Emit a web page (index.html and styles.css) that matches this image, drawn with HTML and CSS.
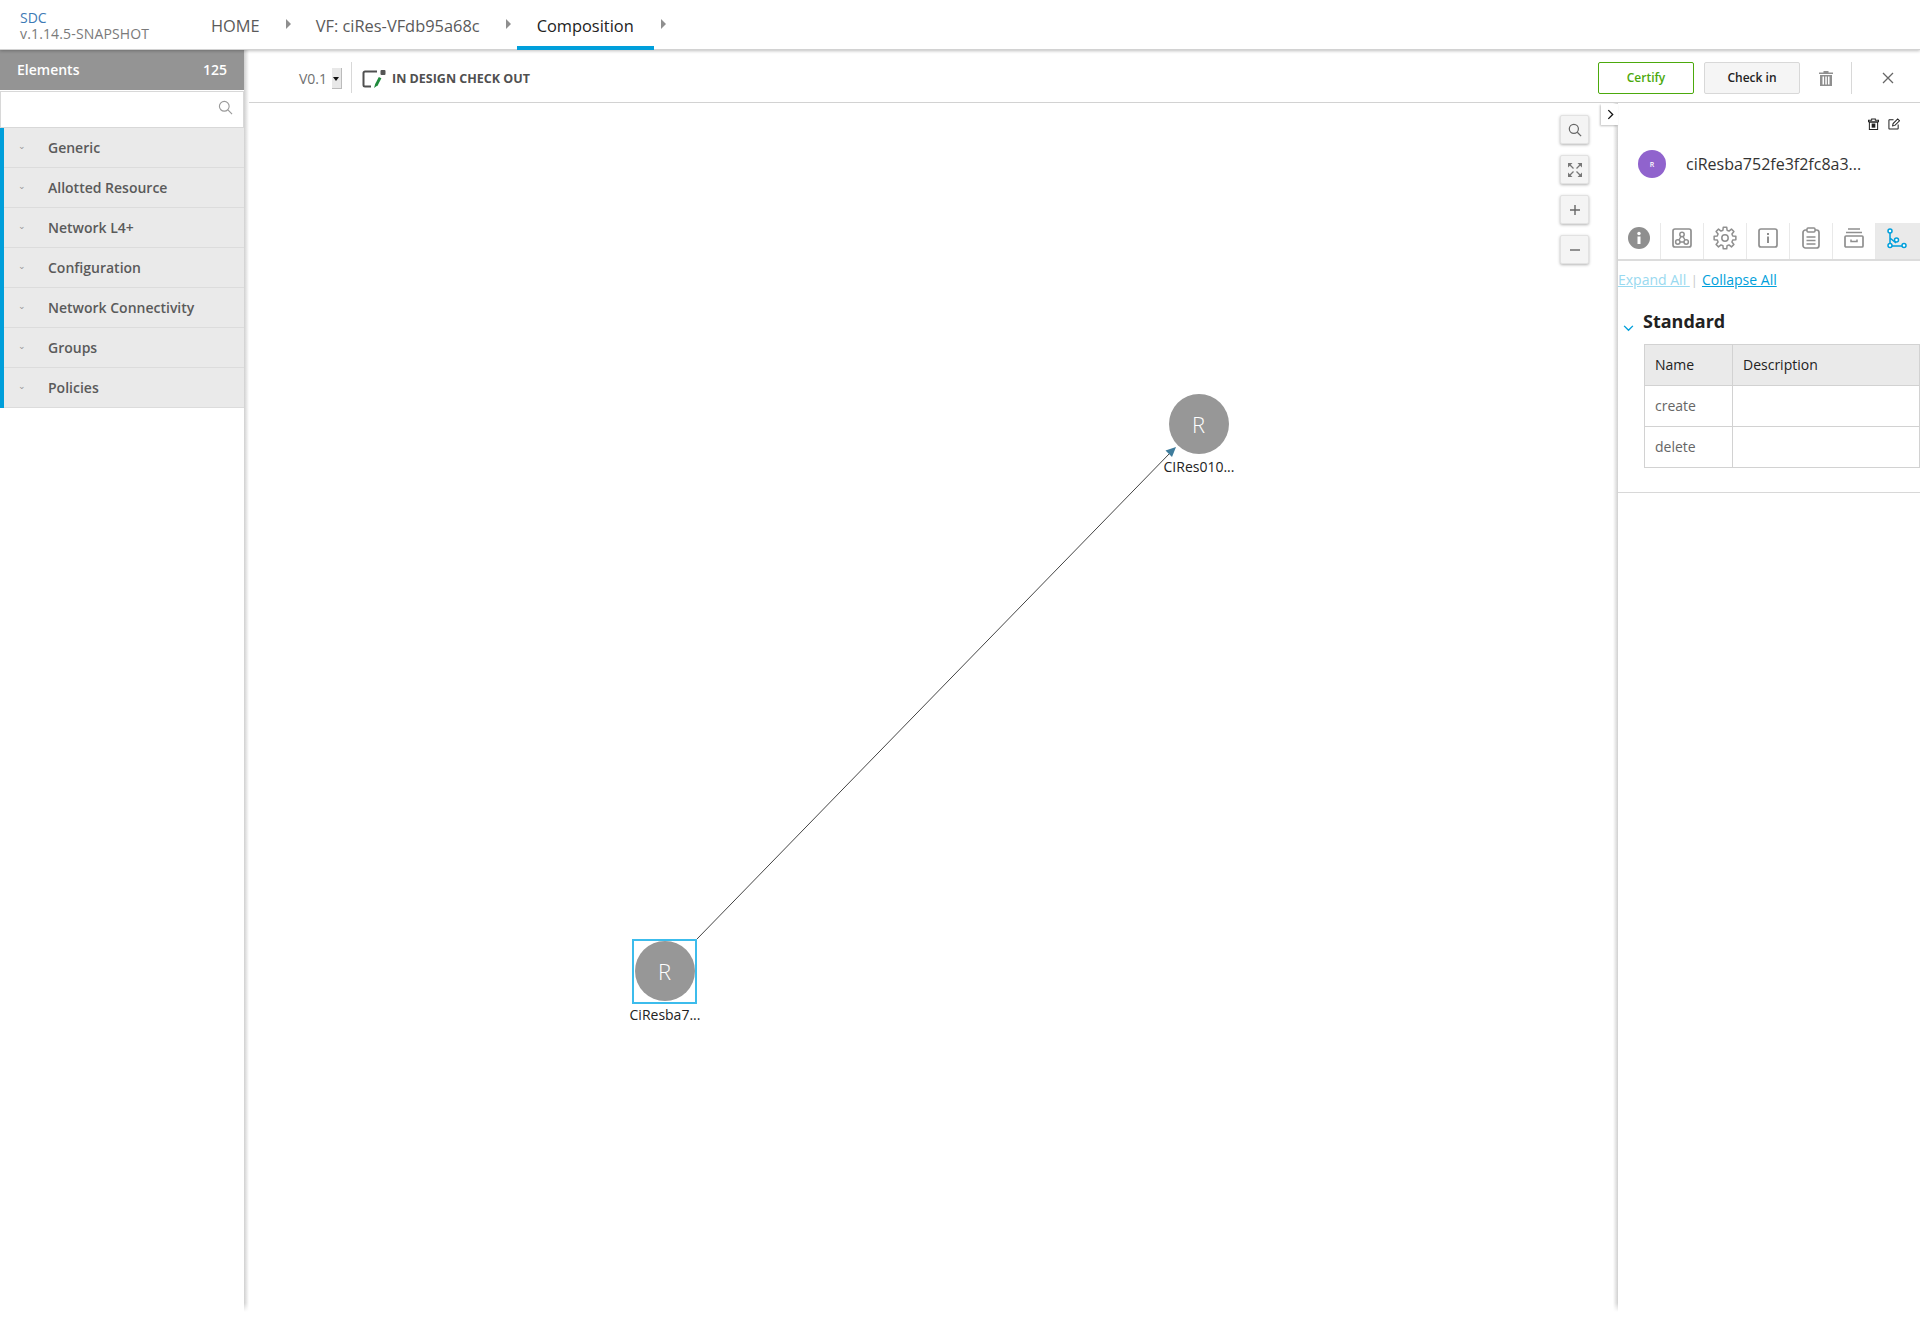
FILE: index.html
```html
<!DOCTYPE html>
<html lang="en">
<head>
<meta charset="utf-8">
<title>SDC Composition</title>
<link rel="stylesheet" href="styles.css">
</head>
<body>
<div class="app">
  <header class="topnav">
    <div class="brand"><div class="brand-name">SDC</div><div class="brand-ver">v.1.14.5-SNAPSHOT</div></div>
    <nav class="crumbs">
      <a class="crumb">HOME</a><span class="tri"></span>
      <a class="crumb crumb-vf">VF: ciRes-VFdb95a68c</a><span class="tri"></span>
      <a class="crumb crumb-active">Composition</a><span class="tri"></span>
    </nav>
  </header>
  <div class="main">
    <aside class="palette">
      <div class="pal-head"><span>Elements</span><span>125</span></div>
      <div class="pal-search">
        <svg class="ic-search" viewBox="0 0 16 16" width="15" height="15"><circle cx="6.7" cy="6.7" r="5.2" fill="none" stroke="#9a9a9a" stroke-width="1.2"/><path d="M10.6 10.6l4.4 4.4" stroke="#9a9a9a" stroke-width="1.2"/></svg>
      </div>
      <ul class="pal-list">
        <li class="pal-item"><span class="chev">&#8964;</span>Generic</li>
        <li class="pal-item"><span class="chev">&#8964;</span>Allotted Resource</li>
        <li class="pal-item"><span class="chev">&#8964;</span>Network L4+</li>
        <li class="pal-item"><span class="chev">&#8964;</span>Configuration</li>
        <li class="pal-item"><span class="chev">&#8964;</span>Network Connectivity</li>
        <li class="pal-item"><span class="chev">&#8964;</span>Groups</li>
        <li class="pal-item"><span class="chev">&#8964;</span>Policies</li>
      </ul>
    </aside>
    <section class="workspace">
      <div class="toolbar">
        <div class="ver"><span>V0.1</span><span class="ver-sel"><i></i></span></div>
        <div class="status">
          <svg viewBox="0 0 24 18" width="24" height="18"><path d="M15 1.500H3A1.500 1.500 0 0 0 1.500 3v12A1.500 1.500 0 0 0 3 16.500h6" fill="none" stroke="#505050" stroke-width="2"/><path d="M12 18l1.200-4 3.600-7 2.600 1.300-3.600 7z" fill="#1f8a3c"/><rect x="18.500" y="0" width="5" height="5" rx="1" fill="#555"/></svg>
          <span>IN DESIGN CHECK OUT</span>
        </div>
        <div class="actions">
          <button class="btn btn-certify">Certify</button>
          <button class="btn btn-checkin">Check in</button>
          <svg class="act-trash" viewBox="0 0 14 16" width="14" height="16"><path d="M4.500 1h5V2.500H14V4H0V2.500h4.500zM1 5h12V16H1zM3.500 6.500v8h1.500v-8zM6.300 6.500v8h1.500v-8zM9 6.500v8h1.500v-8z" fill="#8f8f8f" fill-rule="evenodd"/></svg>
          <span class="act-sep"></span>
          <svg class="act-close" viewBox="0 0 12 12" width="12" height="12"><path d="M1 1l10 10M11 1L1 11" stroke="#666" stroke-width="1.300"/></svg>
        </div>
      </div>
      <div class="body">
        <div class="canvas">
          <svg class="edges" width="1373" height="1207"><path d="M452 836L926 349" stroke="#444" stroke-width="1"/><path d="M931 344l-10.500 3.500 6.500 6.500z" fill="#3f7c9c"/></svg>
          <div class="node node-a"><span class="node-dot">R</span><span class="node-label">CiResba7...</span></div>
          <div class="node node-b"><span class="node-dot">R</span><span class="node-label">CIRes010...</span></div>
          <div class="zoomers">
            <span class="zbtn"><svg viewBox="0 0 16 16" width="14" height="14"><circle cx="6.700" cy="6.700" r="5.200" fill="none" stroke="#666" stroke-width="1.400"/><path d="M10.600 10.600l4.400 4.400" stroke="#666" stroke-width="1.400"/></svg></span>
            <span class="zbtn"><svg viewBox="0 0 14 14" width="14" height="14"><path d="M0 0h4.500L0 4.500zM14 0v4.500L9.500 0zM0 14V9.500L4.500 14zM14 14H9.500L14 9.500z" fill="#777"/><path d="M2 2l3.500 3.500M12 2L8.500 5.500M2 12l3.500-3.500M12 12L8.500 8.500" stroke="#777" stroke-width="1.300"/></svg></span>
            <span class="zbtn"><svg viewBox="0 0 12 12" width="12" height="12"><path d="M6 1v10M1 6h10" stroke="#666" stroke-width="1.400"/></svg></span>
            <span class="zbtn"><svg viewBox="0 0 12 12" width="12" height="12"><path d="M1 6h10" stroke="#666" stroke-width="1.400"/></svg></span>
          </div>
          <span class="collapse-tab"><svg viewBox="0 0 8 12" width="7" height="11"><path d="M1.500 1l5 5-5 5" fill="none" stroke="#111" stroke-width="1.500"/></svg></span>
        </div>
        <aside class="details">
          <div class="det-head">
            <div class="det-tools">
              <svg viewBox="0 0 12 13" width="11" height="12"><path d="M4 1h4v1.500h3.500V4h-11V2.500H4zM1.500 4.500h9V12.500h-9z" fill="none" stroke="#222" stroke-width="1.100"/><rect x="4" y="6" width="4" height="4.500" fill="#222"/></svg>
              <svg viewBox="0 0 13 13" width="12" height="12"><path d="M6 2H1.500a.5.5 0 0 0-.5.5v9a.5.5 0 0 0 .5.500h9a.5.5 0 0 0 .5-.5V7" fill="none" stroke="#222" stroke-width="1.100"/><path d="M5 8.500L5.500 6l5-5 2 2-5 5z" fill="none" stroke="#222" stroke-width="1.100"/></svg>
            </div>
            <div class="det-title"><span class="avatar">R</span><span class="det-name">ciResba752fe3f2fc8a3...</span></div>
          </div>
          <div class="tabs">
            <span class="tab"><svg viewBox="0 0 22 22" width="22" height="22"><circle cx="11" cy="11" r="11" fill="#8f8f8f"/><rect x="9.500" y="9.500" width="3" height="7.500" fill="#fff"/><circle cx="11" cy="6.500" r="1.700" fill="#fff"/></svg></span>
            <span class="tab"><svg viewBox="0 0 20 20" width="20" height="20"><rect x="1" y="1" width="18" height="18" rx="2" fill="none" stroke="#8f8f8f" stroke-width="1.700"/><circle cx="10" cy="6.500" r="2.200" fill="none" stroke="#8f8f8f" stroke-width="1.500"/><circle cx="5.800" cy="14" r="2.200" fill="none" stroke="#8f8f8f" stroke-width="1.500"/><circle cx="14.200" cy="14" r="2.200" fill="none" stroke="#8f8f8f" stroke-width="1.500"/><path d="M9 8.500l-2 3.500M11 8.500l2 3.500M8 14h4" stroke="#8f8f8f" stroke-width="1.500"/></svg></span>
            <span class="tab"><svg viewBox="0 0 24 24" width="24" height="24"><path d="M19.730 9.930L22.860 10.280V13.720L19.730 14.070L18.930 16L20.900 18.470L18.470 20.900L16 18.930L14.070 19.730L13.720 22.860H10.280L9.930 19.730L8 18.930L5.530 20.900L3.100 18.470L5.070 16L4.270 14.070L1.140 13.720V10.280L4.270 9.930L5.070 8L3.100 5.530L5.530 3.100L8 5.070L9.930 4.270L10.280 1.140H13.720L14.070 4.270L16 5.070L18.470 3.100L20.900 5.530L18.930 8z" fill="none" stroke="#8f8f8f" stroke-width="1.500" stroke-linejoin="round"/><circle cx="12" cy="12" r="3.200" fill="none" stroke="#8f8f8f" stroke-width="1.500"/></svg></span>
            <span class="tab"><svg viewBox="0 0 20 20" width="20" height="20"><rect x="1" y="1" width="18" height="18" rx="2" fill="none" stroke="#8f8f8f" stroke-width="1.700"/><rect x="9" y="8.500" width="2" height="6.500" fill="#8f8f8f"/><rect x="9" y="5" width="2" height="2" fill="#8f8f8f"/></svg></span>
            <span class="tab"><svg viewBox="0 0 18 22" width="18" height="22"><rect x="1" y="3" width="16" height="18" rx="2.500" fill="none" stroke="#8f8f8f" stroke-width="1.700"/><rect x="5" y="1" width="8" height="4" rx="1" fill="#fff" stroke="#8f8f8f" stroke-width="1.500"/><path d="M4.500 10h9M4.500 13.500h9M4.500 17h9" stroke="#8f8f8f" stroke-width="1.500"/></svg></span>
            <span class="tab"><svg viewBox="0 0 20 20" width="20" height="20"><path d="M4 1h12M2 4.500h16" stroke="#8f8f8f" stroke-width="1.700"/><rect x="1" y="8" width="18" height="11" rx="1" fill="none" stroke="#8f8f8f" stroke-width="1.700"/><path d="M7 11.500v2h6v-2" fill="none" stroke="#8f8f8f" stroke-width="1.500"/></svg></span>
            <span class="tab tab-active"><svg viewBox="0 0 20 21" width="20" height="21"><path d="M3 4v14M3 18h12M3 10l6 5" fill="none" stroke="#009fdb" stroke-width="1.500"/><circle cx="3" cy="3" r="2" fill="#fff" stroke="#009fdb" stroke-width="1.500"/><circle cx="3" cy="17.500" r="2" fill="#fff" stroke="#009fdb" stroke-width="1.500"/><circle cx="9.500" cy="12" r="2" fill="#fff" stroke="#009fdb" stroke-width="1.500"/><circle cx="17" cy="17.500" r="2" fill="#fff" stroke="#009fdb" stroke-width="1.500"/></svg></span>
          </div>
          <div class="det-body">
            <div class="expanders"><a class="exp-off">Expand All </a><span class="pipe">|</span><a class="exp-on">Collapse All</a></div>
            <div class="section">
              <div class="sec-title"><svg viewBox="0 0 12 8" width="11" height="7"><path d="M1 1l5 5 5-5" fill="none" stroke="#009fdb" stroke-width="1.600"/></svg><span>Standard</span></div>
              <table class="ops">
                <thead><tr><th>Name</th><th>Description</th></tr></thead>
                <tbody><tr><td>create</td><td></td></tr><tr><td>delete</td><td></td></tr></tbody>
              </table>
            </div>
          </div>
        </aside>
      </div>
    </section>
  </div>
</div>
</body>
</html>
```

FILE: styles.css
```css
* { box-sizing: border-box; }
html, body { margin: 0; padding: 0; background: #fff; }
body { font-family: "Open Sans", "Liberation Sans", sans-serif; color: #5a5a5a; }
.app { width: 1920px; height: 1319px; overflow: hidden; display: flex; flex-direction: column; }

.topnav { height: 50px; flex: none; display: flex; background: #fff; border-bottom: 1px solid #d2d2d2; box-shadow: 0 1px 3px rgba(0,0,0,.25); position: relative; z-index: 3; }
.brand { width: 211px; padding: 10px 0 0 20px; font-size: 14px; line-height: 16px; }
.brand-name { color: #3d7ab5; }
.brand-ver { color: #7a7a7a; letter-spacing: .15px; }
.crumbs { display: flex; align-items: stretch; }
.crumb { font-size: 16.400px; line-height: 51px; color: #5a5a5a; white-space: nowrap; }
.crumb-active { color: #222; padding: 0 20px; border-bottom: 4px solid #009fdb; height: 50px; }
.tri { width: 0; height: 0; border-left: 5px solid #8f8f8f; border-top: 5px solid transparent; border-bottom: 5px solid transparent; margin: 19px 25px 0 26px; }
.crumb-active + .tri { margin-left: 7px; }
.crumb-vf + .tri { margin: 19px 6px 0 26px; }

.main { flex: 1; display: flex; min-height: 0; }
.palette { width: 244px; margin-right: 1px; flex: none; height: 1262px; background: #fff; position: relative; z-index: 2; }
.palette::after { content: ""; position: absolute; left: 100%; top: 0; bottom: 0; width: 5px; background: linear-gradient(to right, #d0d0d0, #fff); -webkit-mask-image: linear-gradient(to bottom, #000 calc(100% - 9px), transparent); mask-image: linear-gradient(to bottom, #000 calc(100% - 9px), transparent); }
.pal-head { height: 40px; background: #949494; color: #fff; font-size: 14px; font-weight: 600; display: flex; justify-content: space-between; align-items: center; padding: 0 17px 1px; }
.pal-search { height: 37px; margin: 1px 0 0 0; border: 1px solid #d8d8d8; display: flex; align-items: center; justify-content: flex-end; padding: 0 10px 4px 0; }
.pal-list { list-style: none; margin: 0; padding: 0; border-left: 4px solid #009fdb; }
.pal-item { height: 40px; background: #eaeaea; border-bottom: 1px solid #dcdcdc; color: #5a5a5a; font-size: 14px; font-weight: 600; line-height: 39px; padding-left: 44px; position: relative; }
.chev { position: absolute; left: 14px; top: -2px; font-size: 9px; font-weight: 400; color: #999; }

.workspace { flex: 1; display: flex; flex-direction: column; min-width: 0; }
.toolbar { height: 53px; flex: none; display: flex; align-items: center; border-bottom: 1px solid #d2d2d2; padding: 3px 0 0 54px; }
.ver { display: flex; align-items: center; font-size: 14px; color: #707070; width: 53px; height: 31px; gap: 5px; border-right: 1px solid #d8d8d8; padding-top: 2px; }
.ver-sel { width: 10px; height: 21px; background: #e8e8e8; border: 1px solid #bbb; border-width: 0 1px 1px 0; position: relative; }
.ver-sel i { position: absolute; left: 1px; top: 9px; width: 0; height: 0; border: 3px solid transparent; border-top: 4px solid #111; }
.status { display: flex; align-items: center; gap: 6px; margin-left: 10px; padding-top: 2px; font-size: 12.500px; font-weight: 700; color: #505050; }
.actions { margin-left: auto; display: flex; align-items: center; padding-right: 26px; }
.btn { width: 96px; height: 32px; border-radius: 2px; font-family: inherit; font-size: 12px; font-weight: 600; padding: 0 0 0; }
.btn-certify { background: #fff; border: 1px solid #4ca90c; color: #4ca90c; }
.btn-checkin { margin-left: 10px; background: #f5f5f5; border: 1px solid #d8d8d8; color: #222; }
.act-trash { margin-left: 19px; }
.act-sep { width: 1px; height: 32px; background: #d8d8d8; margin-left: 18px; }
.act-close { margin-left: 30px; }

.body { flex: 1; display: flex; min-height: 0; }
.canvas { flex: 1; position: relative; height: 1207px; }
.edges { position: absolute; left: 0; top: 0; }
.node { position: absolute; width: 80px; display: flex; flex-direction: column; align-items: center; color: #222; font-size: 14px; }
.node-dot { width: 60px; height: 60px; padding-right: 1px; border-radius: 50%; background: #979797; color: #fff; font-size: 22px; font-weight: 300; display: flex; align-items: center; justify-content: center; }
.node-label { margin-top: 5px; line-height: 18px; white-space: nowrap; }
.node-a { left: 380px; top: 838px; }
.node-a::before { content: ""; position: absolute; left: 7px; top: -2px; width: 61px; height: 61px; border: 2px solid #3cbcec; }
.node-b { left: 914px; top: 291px; }
.node-b .node-label { margin-top: 4px; }
.zoomers { position: absolute; left: 1315px; top: 12px; display: flex; flex-direction: column; gap: 11px; }
.zbtn { width: 29px; height: 29px; background: #f4f4f4; border: 1px solid #e2e2e2; border-radius: 2px; box-shadow: 0 1px 3px rgba(0,0,0,.3); display: flex; align-items: center; justify-content: center; }
.collapse-tab { position: absolute; left: 1356px; top: 1px; width: 17px; height: 21px; padding-left: 2px; background: #fff; box-shadow: -1px 1px 2px rgba(0,0,0,.25); display: flex; align-items: center; justify-content: center; z-index: 1; }

.details { width: 302px; flex: none; height: 1209px; background: #fff; position: relative; }
.details::before { content: ""; position: absolute; right: 100%; top: 0; bottom: 0; width: 5px; background: linear-gradient(to left, #d0d0d0, #fff); -webkit-mask-image: linear-gradient(to bottom, #000 calc(100% - 9px), transparent); mask-image: linear-gradient(to bottom, #000 calc(100% - 9px), transparent); }
.det-head { height: 120px; position: relative; }
.det-tools { display: flex; justify-content: flex-end; gap: 9px; padding: 15px 20px 0 0; }
.det-title { display: flex; align-items: center; padding: 20px 0 0 20px; gap: 20px; }
.avatar { width: 28px; height: 28px; border-radius: 50%; background: #9063cd; color: #fff; font-size: 7px; font-weight: 600; display: flex; align-items: center; justify-content: center; }
.det-name { font-size: 16px; color: #333; }
.tabs { display: flex; height: 38px; border-bottom: 2px solid #dcdcdc; }
.tab { width: 43px; display: flex; align-items: center; justify-content: center; border-right: 1px solid #e9e9e9; padding-bottom: 6px; }
.tab-active { background: #eaeaea; border-right: 0; flex: 1; padding-right: 3px; }
.det-body { height: 232px; border-bottom: 1px solid #d8d8d8; }
.expanders { padding-top: 9px; font-size: 14px; line-height: 19px; }
.exp-off { color: #99d9f0; text-decoration: underline; }
.exp-on { color: #009fdb; text-decoration: underline; }
.pipe { color: #c8c8c8; margin: 0 4px 0 1px; font-size: 13px; }
.sec-title { display: flex; align-items: flex-end; gap: 9px; margin: 15px 0 0 5px; height: 28px; font-size: 18px; font-weight: 700; color: #222; }
.sec-title svg { margin-bottom: 1px; }
.ops { margin: 11px 0 0 26px; width: 276px; border-collapse: collapse; font-size: 14px; table-layout: fixed; }
.ops th, .ops td { border: 1px solid #d2d2d2; height: 41px; padding: 0 0 2px 10px; text-align: left; font-weight: 400; }
.ops th { background: #eaeaea; color: #222; }
.ops th:first-child { width: 88px; }
.ops td { color: #666; }
```
